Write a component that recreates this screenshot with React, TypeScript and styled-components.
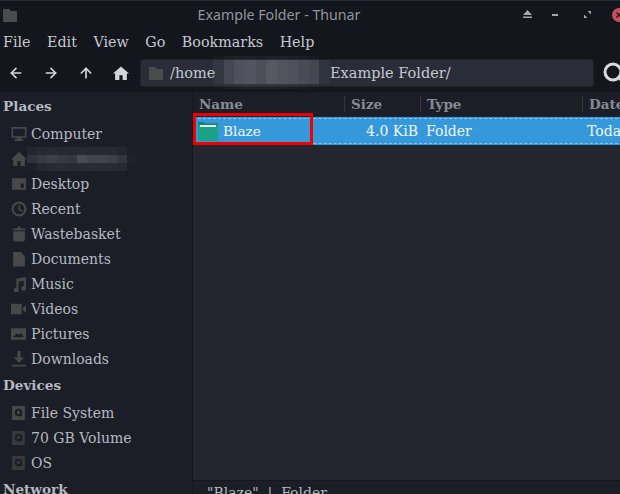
import React from "react";
import styled, { createGlobalStyle } from "styled-components";
import { ArrowLeft, ArrowRight, ArrowUp, Search } from "lucide-react";

const Global = createGlobalStyle`
  html, body { margin: 0; padding: 0; background: #14161d; }
  * { box-sizing: border-box; }
`;
const Win = styled.div`
  width: 620px; height: 494px; overflow: hidden; display: flex; flex-direction: column;
  background: #14161d; color: #c5c8cf; font-family: "DejaVu Serif", serif; font-size: 14px;
  border-top: 1px solid #2a2c33;
`;
const TitleBar = styled.div`
  height: 27px; flex: none; display: flex; align-items: center; padding-left: 3px;
`;
const Title = styled.div`
  flex: 1; padding-left: 17px; text-align: center; font-family: "Noto Sans", sans-serif; font-size: 14.2px; color: #92959c;
`;
const WinButtons = styled.div`
  width: 103px; flex: none; display: flex; align-items: center; margin-right: -6px;
`;
const WinGlyph = styled.svg<{ $gap: number }>`
  flex: none; margin-left: ${(p) => p.$gap}px;
`;
const Menu = styled.div`
  height: 28px; flex: none; display: flex; gap: 16.5px; padding: 0 3px; align-items: center; font-size: 14.3px; color: #c5c8cf;
`;
const Toolbar = styled.div`
  height: 36px; flex: none; display: flex; align-items: center; padding: 0 26px 3px 8px;
`;
const NavIcon = styled.div<{ $w?: number }>`
  width: ${(p) => p.$w ?? 35}px; flex: none; display: flex; color: #d4d6da;
`;
const PathBar = styled.div`
  flex: 1; height: 28px; background: #2a2d38; border-radius: 3px; border: 1px solid #1f2129;
  display: flex; align-items: center; padding-left: 8px; gap: 6px; font-size: 14.5px; color: #c5c8cf; position: relative; white-space: pre;
`;
const PathHome = styled.span`
  width: 154px; flex: none;
`;
const Mosaic = styled.div`
  position: absolute; left: 72px; top: -4px; width: 117px; height: 33px; display: grid; grid-template-columns: repeat(11, 1fr);
  grid-template-rows: 4px 1fr 5px;
`;
const Cell = styled.div<{ $a: number }>`
  background: rgba(110, 112, 122, ${(p) => p.$a});
`;
const SearchSlot = styled.div`
  position: absolute; left: 461px; top: 1px; color: #d8dadd; display: flex;
`;
const Body = styled.div`
  flex: 1; display: flex; min-height: 0;
`;
const Side = styled.div`
  width: 193px; flex: none; background: #1b1e27; border-right: 1px solid #15171d;
`;
const SideHead = styled.div`
  height: 29px; padding: 0 0 2px 3px; font-weight: 700; font-size: 13.6px; color: #b6b9c0; display: flex; align-items: center;
`;
const SideRow = styled.div`
  height: 25px; display: flex; align-items: center; padding-left: 11px; gap: 4px; color: #b6b9c0; position: relative;
`;
const IconBox = styled.svg<{ $dim?: boolean }>`
  width: 16px; height: 16px; fill: ${(p) => (p.$dim ? "#37393c" : "#474849")}; flex: none;
`;
const NameMosaic = styled.div`
  position: absolute; left: 27px; top: 1px; width: 110px; height: 24px; display: grid; grid-template-columns: repeat(11, 1fr); grid-template-rows: repeat(3, 1fr);
`;
const Main = styled.div`
  flex: 1; background: #23262e; display: flex; flex-direction: column; position: relative;
`;
const HeadRow = styled.div`
  height: 24px; flex: none; display: flex; font-weight: 700; font-size: 13.5px; color: #878a92; background: #1b1e27;
`;
const HeadCell = styled.div<{ $w: number }>`
  width: ${(p) => p.$w}px; flex: none; padding-left: 6px; display: flex; align-items: center; position: relative;
  &:not(:last-child)::after { content: ""; position: absolute; right: 0; top: 4px; bottom: 4px; width: 1px; background: #33363e; }
`;
const FileRow = styled.div`
  margin-top: 1px; height: 28px; flex: none; background: #3498db; color: #f4f7fa; display: flex; align-items: center; white-space: nowrap; overflow: hidden; position: relative;
  &::after { content: ""; position: absolute; inset: 1px 0; border-top: 1px dashed #8cc4ea; border-bottom: 1px dashed #8cc4ea; }
`;
const NameCell = styled.div`
  width: 152px; flex: none; display: flex; align-items: center; gap: 5px; padding-left: 5px; font-size: 13.7px;
`;
const SizeCell = styled.div`
  width: 73px; flex: none; text-align: right;
`;
const TypeCell = styled.div`
  width: 169px; flex: none; padding-left: 8px;
`;
const Highlight = styled.div`
  position: absolute; left: 0; top: 21px; width: 120px; height: 32px; border: 3px solid #f00000;
`;
const Files = styled.div`
  flex: 1;
`;
const Status = styled.div`
  height: 14px; flex: none; background: #1b1e27; border-top: 1px solid #15171d; padding-left: 14px; font-size: 14px; line-height: 24px; color: #b6b9c0; overflow: hidden; white-space: pre;
`;

const P: Record<string, React.ReactNode> = {
  computer: <path d="M0.500 1h14v10H9.500v1.500h2V14h-8v-1.500h2V11h-5zm1.500 1.500v7h11v-7z" />,
  home: <path d="M7.500 1 15 8h-2v6H9V9.500H6V14H2V8H0z" />,
  desktop: <path d="M1 2h13v11H1zm8 5v4h3V7z" />,
  recent: <path fillRule="evenodd" d="M7.500 0.500a7 7 0 1 1 0 14 7 7 0 0 1 0-14zm0 2a5 5 0 1 0 0 10 5 5 0 0 0 0-10zM7 4h1.500v3.500l2.500 1.500-.7 1.200L7 8.300z" />,
  trash: <path d="M2 5h11v8q0 1.500-1.500 1.500h-8Q2 14.500 2 13zM1.500 2.500 6 2 6.500 .5h2L9 2l4.500.5V4h-12z" />,
  doc: <path d="M2 1h7l4 4v9.500H2z" />,
  music: <path d="M5 2.500 14 1v10.500a2.200 2.200 0 1 1-2-2V4.500L7 5.500v7.500a2.200 2.200 0 1 1-2-2z" />,
  video: <path d="M0 2.500h10v10H0zm11 4 3-2.500v7l-3-2.500z" />,
  picture: <path fillRule="evenodd" d="M0 2h14v11H0zm2 8.500h10L9.500 6.500 7.500 8.500 5 7z" />,
  download: <path d="M6 0h3v6h3.500L7.500 11 2.500 6H6zM1 13h13v1.500H1z" />,
  drive: <path fillRule="evenodd" d="M1 1h12v13H1zm6 2.500a3.500 3.500 0 1 0 0 7h3.500V7A3.500 3.500 0 0 0 7 3.500zm0 2a1.600 1.600 0 1 1 0 3.200 1.600 1.600 0 0 1 0-3.200z" />,
};
const Icon = ({ n, dim }: { n: string; dim?: boolean }) => (
  <IconBox viewBox="0 0 15 15" $dim={dim}>{P[n]}</IconBox>
);
const places: [string, string][] = [
  ["computer", "Computer"], ["home", ""], ["desktop", "Desktop"], ["recent", "Recent"], ["trash", "Wastebasket"],
  ["doc", "Documents"], ["music", "Music"], ["video", "Videos"], ["picture", "Pictures"], ["download", "Downloads"],
];
const pathShades = [
  0.05,0.1,0.12,0.12,0.1,0.12,0.12,0.1,0.08,0.05,0,
  0.15,0.4,0.55,0.6,0.5,0.65,0.6,0.55,0.45,0.4,0.1,
  0.03,0.1,0.12,0.14,0.12,0.14,0.12,0.1,0.08,0.05,0,
];
const nameShades = [0.1,0.14,0.16,0.14,0.14,0.16,0.14,0.14,0.14,0.1,0.02, 0.25,0.35,0.4,0.35,0.3,0.55,0.45,0.45,0.4,0.3,0.05, 0.03,0.12,0.16,0.18,0.15,0.16,0.18,0.16,0.16,0.14,0.02];

export default function App() {
  return (
    <Win>
      <Global />
      <TitleBar>
        <svg width="15" height="14" viewBox="0 0 15 14"><path fill="#4a4b4d" d="M0 1h6l2 2h6v11H0z" /></svg>
        <Title>Example Folder - Thunar</Title>
        <WinButtons>
          <WinGlyph $gap={0} width="9" height="9" viewBox="0 0 9 9"><path fill="#a5a7ab" d="M4.500 0 9 5H0zM0 6.500h9V8H0z" /></WinGlyph>
          <WinGlyph $gap={20} width="6" height="2" viewBox="0 0 6 2"><path fill="#a5a7ab" d="M0 0h6v2H0z" /></WinGlyph>
          <WinGlyph $gap={26} width="7" height="7" viewBox="0 0 7 7"><path fill="#a5a7ab" d="M3.500 0H7v3.500zM0 3.500 3.500 7H0z" /></WinGlyph>
          <WinGlyph $gap={21} width="14" height="14" viewBox="0 0 14 14"><circle cx="7" cy="7" r="7" fill="#c3505b" /><path stroke="#2a1c20" strokeWidth="1.500" d="M4.500 4.500l5 5M9.500 4.500l-5 5" /></WinGlyph>
        </WinButtons>
      </TitleBar>
      <Menu>
        {["File", "Edit", "View", "Go", "Bookmarks", "Help"].map((m) => <span key={m}>{m}</span>)}
      </Menu>
      <Toolbar>
        <NavIcon><ArrowLeft size={16} strokeWidth={2.5} /></NavIcon>
        <NavIcon><ArrowRight size={16} strokeWidth={2.5} /></NavIcon>
        <NavIcon><ArrowUp size={16} strokeWidth={2.5} /></NavIcon>
        <NavIcon $w={27}>
          <svg width="16" height="16" viewBox="0 0 15 15"><path fill="#d4d6da" d="M7.500 1.500 15 8h-2v6H9V9.500H6V14H2V8H0z" /></svg>
        </NavIcon>
        <PathBar>
          <svg width="15" height="14" viewBox="0 0 15 14"><path fill="#4a4b4d" d="M0 1h6l2 2h6v11H0z" /></svg>
          <PathHome>/home</PathHome>
          <span>Example Folder/</span>
          <Mosaic>{pathShades.map((a, i) => <Cell key={i} $a={a} />)}</Mosaic>
          <SearchSlot><Search size={24} strokeWidth={3} /></SearchSlot>
        </PathBar>
      </Toolbar>
      <Body>
        <Side>
          <SideHead>Places</SideHead>
          {places.map(([n, t]) => (
            <SideRow key={n}>
              <Icon n={n} />{t}
              {n === "home" && <NameMosaic>{nameShades.map((a, i) => <Cell key={i} $a={a} />)}</NameMosaic>}
            </SideRow>
          ))}
          <SideHead>Devices</SideHead>
          <SideRow><Icon n="drive" />File System</SideRow>
          <SideRow><Icon n="drive" dim />70 GB Volume</SideRow>
          <SideRow><Icon n="drive" dim />OS</SideRow>
          <SideHead>Network</SideHead>
        </Side>
        <Main>
          <HeadRow>
            <HeadCell $w={152}>Name</HeadCell>
            <HeadCell $w={76}>Size</HeadCell>
            <HeadCell $w={162}>Type</HeadCell>
            <HeadCell $w={60}>Date</HeadCell>
          </HeadRow>
          <FileRow>
            <NameCell>
              <svg width="20" height="19" viewBox="0 0 20 19">
                <path fill="#17806f" d="M0 0h6l1 1.500h13V5H0z" />
                <path fill="#1aa186" d="M0 3h20v15q0 1-1 1H1q-1 0-1-1z" />
                <path fill="#e8efe9" d="M2 3h16v2H2z" />
              </svg>
              Blaze
            </NameCell>
            <SizeCell>4.0 KiB</SizeCell>
            <TypeCell>Folder</TypeCell>
            <span>Today</span>
          </FileRow>
          <Files />
          <Status>"Blaze"  |  Folder</Status>
          <Highlight />
        </Main>
      </Body>
    </Win>
  );
}
